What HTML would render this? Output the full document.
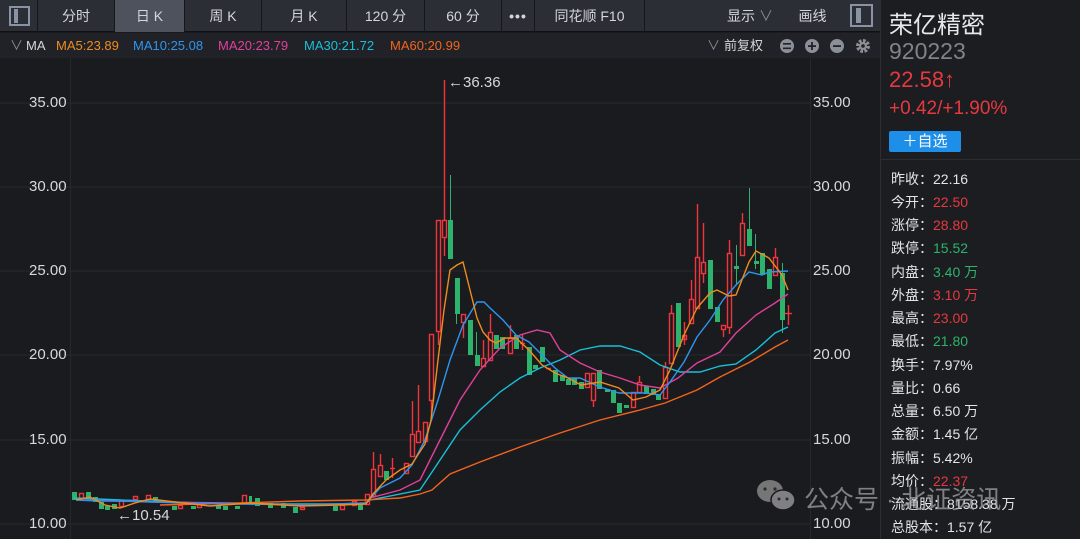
<!DOCTYPE html>
<html><head><meta charset="utf-8"><style>
*{margin:0;padding:0;box-sizing:border-box}
body{width:1080px;height:539px;background:#1a1b1f;font-family:"Liberation Sans","Noto Sans CJK SC",sans-serif;overflow:hidden;position:relative;color:#d0d2d6}
.tb{position:absolute;left:0;top:0;width:880px;height:32px;background:#2b2e35;border-bottom:1px solid #111}
.b{position:absolute;top:0;height:32px;line-height:32px;text-align:center;font-size:14px;color:#d4d6da;border-right:1px solid #16171a}
.ma{position:absolute;left:0;top:33px;width:880px;height:25px;background:#202227;font-size:13px;line-height:25px}
.ma span{position:absolute;top:0}
.rp{position:absolute;left:880px;top:0;width:200px;height:539px;background:#1c1d21;border-left:1px solid #2c2e33}
.row{position:absolute;left:10px;font-size:14px;color:#e2e4e8}
.r{color:#e5393f}.g{color:#2db36b}
.ax{position:absolute;font-size:15px;color:#d6d8dc}
</style></head><body>
<div class="tb">
<div class="b" style="left:0;width:38px"><div style="position:absolute;left:9px;top:6px;width:21px;height:20px;border:2px solid #8a93a3"><div style="position:absolute;left:3px;top:1px;width:4px;height:14px;background:#8a93a3"></div></div></div>
<div class="b" style="left:38px;width:77px">分时</div>
<div class="b" style="left:115px;width:70px;background:#4d525c">日 K</div>
<div class="b" style="left:185px;width:77px">周 K</div>
<div class="b" style="left:262px;width:85px">月 K</div>
<div class="b" style="left:347px;width:78px">120 分</div>
<div class="b" style="left:425px;width:77px">60 分</div>
<div class="b" style="left:502px;width:33px;font-weight:bold;letter-spacing:1px">•••</div>
<div class="b" style="left:535px;width:110px">同花顺 F10</div>
<div class="b" style="left:715px;width:70px;border:none">显示 <span style="color:#8a8f98">∨</span></div>
<div class="b" style="left:790px;width:45px;border:none">画线</div>
<div style="position:absolute;left:850px;top:4px;width:23px;height:23px;border:2px solid #8a93a3"><div style="position:absolute;left:4px;top:2px;width:5px;height:15px;background:#8a93a3"></div></div>
</div>
<div class="ma">
<span style="left:10px;color:#8a8f98">∨</span><span style="left:26px;color:#d4d6da">MA</span>
<span style="left:56px;color:#f08c1e">MA5:23.89</span>
<span style="left:133px;color:#2d96f0">MA10:25.08</span>
<span style="left:218px;color:#e0409a">MA20:23.79</span>
<span style="left:304px;color:#18c0d8">MA30:21.72</span>
<span style="left:390px;color:#f2641e">MA60:20.99</span>
<span style="left:707px;color:#8a8f98">∨</span><span style="left:724px;color:#d4d6da">前复权</span>
<svg style="position:absolute;left:778px;top:5px" width="96" height="16">
<circle cx="9" cy="8" r="7" fill="#8a8f98"/><rect x="5" y="5" width="8" height="1.6" fill="#202227"/><rect x="5" y="9.5" width="8" height="1.6" fill="#202227"/>
<circle cx="34" cy="8" r="7" fill="#8a8f98"/><rect x="30" y="7.2" width="8" height="1.8" fill="#202227"/><rect x="33.1" y="4" width="1.8" height="8" fill="#202227"/>
<circle cx="59" cy="8" r="7" fill="#8a8f98"/><rect x="55" y="7.2" width="8" height="1.8" fill="#202227"/>
<circle cx="85" cy="8" r="5" fill="none" stroke="#8a8f98" stroke-width="4" stroke-dasharray="2.5 1.4"/><circle cx="85" cy="8" r="4" fill="#8a8f98"/><circle cx="85" cy="8" r="1.8" fill="#202227"/>
</svg>
</div>
<svg style="position:absolute;left:0;top:58px" width="880" height="481" viewBox="0 58 880 481">
<g stroke="#26282d" stroke-width="1">
<line x1="0" y1="103" x2="810" y2="103"/><line x1="0" y1="187" x2="810" y2="187"/><line x1="0" y1="271" x2="810" y2="271"/><line x1="0" y1="355" x2="810" y2="355"/><line x1="0" y1="440" x2="810" y2="440"/><line x1="0" y1="524" x2="810" y2="524"/>
<line x1="70.5" y1="58" x2="70.5" y2="539"/><line x1="810.5" y1="58" x2="810.5" y2="539"/>
</g>
<g fill="#2db36b">
<rect x="72" y="492" width="5" height="8"/><rect x="86" y="492" width="5" height="6"/><rect x="93" y="497" width="5" height="5"/><rect x="99" y="502" width="5" height="7"/><rect x="105" y="506" width="5" height="4"/><rect x="112" y="504" width="5" height="5"/><rect x="153" y="497" width="5" height="5"/><rect x="172" y="506" width="5" height="4"/><rect x="191" y="506" width="5" height="3"/><rect x="216" y="505" width="5" height="4"/><rect x="223" y="506" width="5" height="4"/><rect x="235" y="506" width="5" height="3"/><rect x="249" y="496" width="3" height="6"/><rect x="255" y="498" width="5" height="8"/><rect x="268" y="503" width="5" height="5"/><rect x="281" y="503" width="5" height="5"/><rect x="293" y="507" width="5" height="6"/><rect x="333" y="506" width="5" height="5"/><rect x="358" y="504" width="5" height="6"/>
</g>
<g fill="none" stroke="#f0363c" stroke-width="1.4">
<rect x="79.5" y="493.5" width="4" height="5"/><rect x="119.5" y="500.5" width="4" height="6"/><rect x="133.5" y="496.5" width="4" height="3"/><rect x="146.5" y="495.5" width="4" height="4"/><rect x="178.5" y="505.5" width="4" height="3"/><rect x="197.5" y="504.5" width="4" height="3"/><rect x="242.5" y="495.5" width="4" height="8"/><rect x="300.5" y="507.5" width="4" height="2"/><rect x="340.5" y="505.5" width="4" height="4"/><rect x="352.5" y="501.5" width="4" height="4"/><rect x="365.5" y="494.5" width="4" height="10"/>
<rect x="371.5" y="469.5" width="4" height="27"/><line x1="373.5" y1="452" x2="373.5" y2="469"/>
<rect x="378.5" y="465.5" width="4" height="11"/><line x1="380.5" y1="454" x2="380.5" y2="465"/>
<line x1="392.5" y1="458" x2="392.5" y2="478"/><line x1="390" y1="468.5" x2="395" y2="468.5"/>
<rect x="404.5" y="463.5" width="4" height="10"/>
<rect x="410.5" y="434.5" width="4" height="22"/><line x1="412.5" y1="401" x2="412.5" y2="434"/>
<rect x="416.5" y="431.5" width="4" height="11"/><line x1="418.5" y1="385" x2="418.5" y2="431"/>
<rect x="423.5" y="422.5" width="4" height="19"/>
<rect x="429.5" y="334.5" width="4" height="66"/><line x1="431.5" y1="400" x2="431.5" y2="420"/>
<rect x="436.5" y="220.5" width="4" height="111"/><line x1="438.5" y1="331" x2="438.5" y2="345"/>
<rect x="442.5" y="220.5" width="4" height="17"/><line x1="444.5" y1="80" x2="444.5" y2="220"/><line x1="444.5" y1="237" x2="444.5" y2="256"/>
<rect x="461.5" y="314.5" width="4" height="8"/><line x1="463.5" y1="322" x2="463.5" y2="338"/>
<rect x="481.5" y="358.5" width="4" height="8"/><line x1="483.5" y1="340" x2="483.5" y2="358"/>
<rect x="488.5" y="332.5" width="4" height="28"/><line x1="490.5" y1="314" x2="490.5" y2="332"/>
<rect x="508.5" y="338.5" width="4" height="15"/><line x1="510.5" y1="325" x2="510.5" y2="338"/>
<line x1="522.5" y1="334" x2="522.5" y2="350"/><line x1="520" y1="343.5" x2="525" y2="343.5"/>
<line x1="546" y1="368.5" x2="551" y2="368.5"/>
<rect x="585.5" y="373.5" width="4" height="14"/>
<rect x="591.5" y="373.5" width="4" height="27"/><line x1="593.5" y1="400" x2="593.5" y2="407"/>
<rect x="631.5" y="392.5" width="4" height="15"/>
<rect x="637.5" y="382.5" width="4" height="10"/><line x1="639.5" y1="376" x2="639.5" y2="382"/>
<rect x="663.5" y="367.5" width="4" height="31"/><line x1="665.5" y1="362" x2="665.5" y2="367"/>
<rect x="669.5" y="313.5" width="4" height="50"/><line x1="671.5" y1="305" x2="671.5" y2="313"/>
<rect x="682.5" y="335.5" width="4" height="4"/><line x1="684.5" y1="322" x2="684.5" y2="345"/>
<rect x="689.5" y="299.5" width="4" height="24"/><line x1="691.5" y1="280" x2="691.5" y2="299"/>
<rect x="695.5" y="257.5" width="4" height="51"/><line x1="697.5" y1="204" x2="697.5" y2="257"/>
<rect x="701.5" y="262.5" width="4" height="11"/><line x1="703.5" y1="223" x2="703.5" y2="262"/><line x1="703.5" y1="274" x2="703.5" y2="283"/>
<rect x="721.5" y="325.5" width="4" height="4"/><line x1="723.5" y1="329" x2="723.5" y2="337"/>
<rect x="727.5" y="253.5" width="4" height="74"/><line x1="729.5" y1="240" x2="729.5" y2="253"/><line x1="729.5" y1="327" x2="729.5" y2="334"/>
<rect x="740.5" y="223.5" width="4" height="32"/><line x1="742.5" y1="213" x2="742.5" y2="223"/>
<rect x="773.5" y="257.5" width="4" height="18"/><line x1="775.5" y1="248" x2="775.5" y2="257"/>
<line x1="788.5" y1="305" x2="788.5" y2="325"/><line x1="785" y1="313.5" x2="792" y2="313.5"/>
</g>
<g fill="#2db36b">
<rect x="384" y="471" width="5" height="9"/><rect x="448" y="220" width="5" height="39"/><rect x="450" y="175" width="1" height="45"/>
<rect x="455" y="278" width="5" height="36"/><rect x="456" y="314" width="1" height="10"/>
<rect x="468" y="320" width="5" height="35"/><rect x="475" y="355" width="5" height="11"/><rect x="476" y="332" width="1" height="23"/>
<rect x="494" y="335" width="5" height="14"/><rect x="500" y="337" width="5" height="12"/><rect x="514" y="335" width="5" height="14"/>
<rect x="527" y="347" width="5" height="28"/><rect x="533" y="365" width="5" height="4"/><rect x="540" y="347" width="5" height="15"/>
<rect x="553" y="370" width="5" height="12"/><rect x="560" y="375" width="5" height="6"/><rect x="566" y="379" width="5" height="6"/><rect x="572" y="378" width="5" height="7"/><rect x="579" y="382" width="5" height="7"/>
<rect x="597" y="370" width="5" height="19"/><rect x="605" y="389" width="5" height="3"/><rect x="611" y="390" width="5" height="13"/><rect x="617" y="403" width="5" height="10"/><rect x="624" y="405" width="5" height="3"/>
<rect x="644" y="386" width="5" height="8"/><rect x="651" y="389" width="5" height="6"/><rect x="656" y="394" width="5" height="6"/>
<rect x="676" y="303" width="5" height="44"/><rect x="708" y="260" width="5" height="49"/><rect x="715" y="307" width="5" height="15"/>
<rect x="734" y="266" width="5" height="3"/><rect x="736" y="245" width="1" height="40"/><rect x="747" y="229" width="5" height="17"/><rect x="749" y="188" width="1" height="41"/>
<rect x="754" y="261" width="5" height="3"/><rect x="755" y="234" width="1" height="35"/><rect x="760" y="253" width="5" height="22"/><rect x="767" y="269" width="5" height="20"/><rect x="780" y="273" width="5" height="47"/><rect x="782" y="263" width="1" height="70"/>
</g>
<g fill="none" stroke-width="1.4">
<polyline stroke="#18c0d8" points="74,498 120,500 200,503 280,504 340,504 366,503 370,500 420,490 440,460 460,430 480,410 500,392 520,378 540,368 560,360 580,350 600,346 620,346 640,352 660,365 680,372 700,372 720,366 736,364 756,350 775,333 788,327"/>
<polyline stroke="#e0409a" points="80,500 150,502 230,503 300,505 366,504 370,498 400,490 420,480 440,440 460,400 480,370 500,348 520,335 537,330 550,333 560,350 580,363 600,372 620,378 640,385 660,388 678,378 697,363 720,352 736,333 756,315 775,303 788,294"/>
<polyline stroke="#f2641e" points="160,505 240,503 300,501 365,500 400,498 420,494 432,490 450,474 480,462 520,447 560,433 600,420 640,410 665,403 697,390 720,377 750,362 775,347 788,340"/>
<polyline stroke="#2d96f0" points="76,500 100,501 130,501 180,503 240,504 300,505 366,503 380,488 400,478 412,465 425,440 438,400 450,360 463,325 477,302 484,302 490,308 503,320 516,335 529,342 542,355 555,368 568,378 580,378 600,387 619,393 646,393 660,395 670,382 684,362 697,337 710,320 723,300 736,285 749,272 762,275 769,272 788,271"/>
<polyline stroke="#f08c1e" points="76,500 90,497 105,505 120,508 135,503 150,499 175,502 210,506 250,503 300,506 340,505 366,504 373,494 386,480 400,470 412,464 425,444 431,420 438,360 444,310 450,270 457,265 463,262 470,290 477,318 483,332 490,340 496,343 505,338 516,338 529,350 542,365 555,373 568,378 581,385 600,382 619,388 633,400 646,397 660,390 670,370 684,335 697,308 710,293 717,290 729,296 736,295 749,262 756,251 769,258 782,275 788,290"/>
</g>
<text x="448" y="87" fill="#d6d8dc" font-size="15" font-family="Liberation Sans">←36.36</text>
<text x="117" y="520" fill="#d6d8dc" font-size="15" font-family="Liberation Sans">←10.54</text>
</svg>
<div class="ax" style="left:29px;top:94px">35.00</div><div class="ax" style="left:29px;top:178px">30.00</div><div class="ax" style="left:29px;top:262px">25.00</div><div class="ax" style="left:29px;top:346px">20.00</div><div class="ax" style="left:29px;top:431px">15.00</div><div class="ax" style="left:29px;top:515px">10.00</div>
<div class="ax" style="left:813px;top:94px">35.00</div><div class="ax" style="left:813px;top:178px">30.00</div><div class="ax" style="left:813px;top:262px">25.00</div><div class="ax" style="left:813px;top:346px">20.00</div><div class="ax" style="left:813px;top:431px">15.00</div><div class="ax" style="left:813px;top:515px">10.00</div>
<div class="rp">
<div style="position:absolute;left:8px;top:5px;font-size:24px;color:#e6e8ec">荣亿精密</div>
<div style="position:absolute;left:8px;top:38px;font-size:23px;color:#7e838c">920223</div>
<div style="position:absolute;left:8px;top:67px;font-size:22px" class="r">22.58↑</div>
<div style="position:absolute;left:8px;top:98px;font-size:19px" class="r">+0.42/+1.90%</div>
<div style="position:absolute;left:8px;top:131px;width:72px;height:21px;background:#1e8fe8;border-radius:2px;color:#fff;font-size:15px;line-height:21px;text-align:center">＋自选</div>
<div style="position:absolute;left:0;top:159px;width:200px;height:1px;background:#2c2e33"></div>
<div class="row" style="top:169px">昨收：<span>22.16</span></div>
<div class="row" style="top:192px">今开：<span class="r">22.50</span></div>
<div class="row" style="top:215px">涨停：<span class="r">28.80</span></div>
<div class="row" style="top:238px">跌停：<span class="g">15.52</span></div>
<div class="row" style="top:262px">内盘：<span class="g">3.40 万</span></div>
<div class="row" style="top:285px">外盘：<span class="r">3.10 万</span></div>
<div class="row" style="top:308px">最高：<span class="r">23.00</span></div>
<div class="row" style="top:331px">最低：<span class="g">21.80</span></div>
<div class="row" style="top:355px">换手：7.97%</div>
<div class="row" style="top:378px">量比：0.66</div>
<div class="row" style="top:401px">总量：6.50 万</div>
<div class="row" style="top:424px">金额：1.45 亿</div>
<div class="row" style="top:448px">振幅：5.42%</div>
<div class="row" style="top:471px">均价：<span class="r">22.37</span></div>
<div class="row" style="top:494px">流通股：8158.38 万</div>
<div class="row" style="top:517px">总股本：1.57 亿</div>
</div>
<div style="position:absolute;left:756px;top:478px;width:300px;height:36px;opacity:0.72">
<svg width="42" height="34" style="position:absolute;left:0;top:0"><ellipse cx="14" cy="13" rx="13" ry="11" fill="#9a9a9a"/><ellipse cx="27" cy="22" rx="12" ry="10" fill="#a8a8a8" stroke="#1a1b1f" stroke-width="1.5"/><circle cx="9" cy="11" r="1.6" fill="#333"/><circle cx="19" cy="11" r="1.6" fill="#333"/><circle cx="23" cy="21" r="1.5" fill="#333"/><circle cx="31" cy="21" r="1.5" fill="#333"/></svg>
<div style="position:absolute;left:48px;top:2px;font-size:25px;color:#a8a8a8;white-space:nowrap">公众号 · 北证资讯</div>
</div>
</body></html>
